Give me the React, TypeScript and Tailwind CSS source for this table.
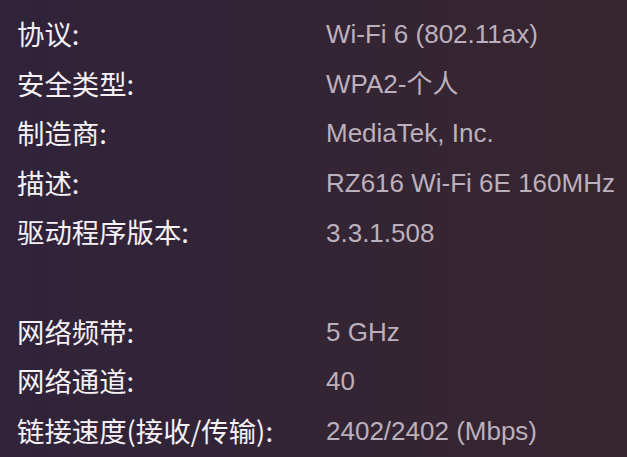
const rows: ([string, string] | null)[] = [
  ["协议:", "Wi-Fi 6 (802.11ax)"],
  ["安全类型:", "WPA2-个人"],
  ["制造商:", "MediaTek, Inc."],
  ["描述:", "RZ616 Wi-Fi 6E 160MHz"],
  ["驱动程序版本:", "3.3.1.508"],
  null,
  ["网络频带:", "5 GHz"],
  ["网络通道:", "40"],
  ["链接速度(接收/传输):", "2402/2402 (Mbps)"],
];

export default function App() {
  return (
    <div className="h-[457px] w-[627px] overflow-hidden bg-gradient-to-r from-[#30233a] to-[#37262f] pt-[9px]">
      {rows.map((row, i) =>
        row ? (
          <div key={i} className="flex h-[49.6px] items-center">
            <div className="w-[326px] shrink-0 pl-[17px] font-['Noto_Sans_CJK_SC',sans-serif] text-[27.4px] leading-none text-[#f5f1f5]">
              {row[0]}
            </div>
            <div className="whitespace-nowrap pt-[1px] font-['Liberation_Sans','Noto_Sans_CJK_SC',sans-serif] text-[26px] leading-none text-[#bcb0bd]">
              {row[1]}
            </div>
          </div>
        ) : (
          <div key={i} className="h-[49.6px]" />
        ),
      )}
    </div>
  );
}
